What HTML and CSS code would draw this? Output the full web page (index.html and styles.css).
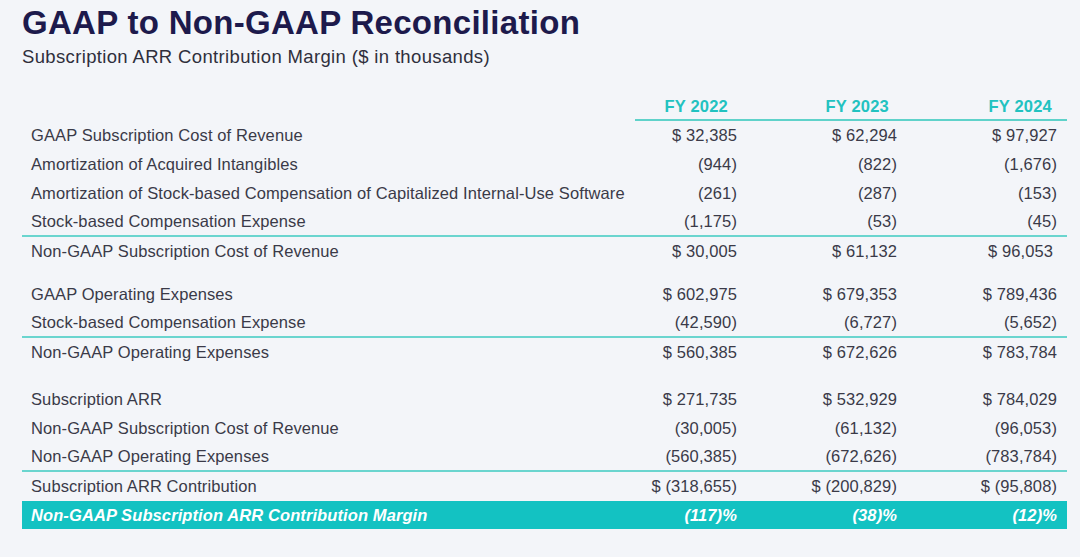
FILE: index.html
```html
<!DOCTYPE html>
<html lang="en">
<head>
<meta charset="utf-8">
<title>GAAP to Non-GAAP Reconciliation</title>
<link rel="stylesheet" href="styles.css">
</head>
<body>
<div class="slide">
  <h1 class="title">GAAP to Non-GAAP Reconciliation</h1>
  <p class="subtitle">Subscription ARR Contribution Margin ($ in thousands)</p>

  <div class="table">
    <div class="row head">
      <span class="label"></span>
      <span class="yr yr-1">FY 2022</span>
      <span class="yr yr-2">FY 2023</span>
      <span class="yr yr-3">FY 2024</span>
    </div>

    <div class="row">
      <span class="label">GAAP Subscription Cost of Revenue</span>
      <span class="num">$ 32,385</span><span class="num">$ 62,294</span><span class="num">$ 97,927</span>
    </div>
    <div class="row">
      <span class="label">Amortization of Acquired Intangibles</span>
      <span class="num">(944)</span><span class="num">(822)</span><span class="num">(1,676)</span>
    </div>
    <div class="row">
      <span class="label">Amortization of Stock-based Compensation of Capitalized Internal-Use Software</span>
      <span class="num">(261)</span><span class="num">(287)</span><span class="num">(153)</span>
    </div>
    <div class="row ruled">
      <span class="label">Stock-based Compensation Expense</span>
      <span class="num">(1,175)</span><span class="num">(53)</span><span class="num">(45)</span>
    </div>
    <div class="row">
      <span class="label">Non-GAAP Subscription Cost of Revenue</span>
      <span class="num">$ 30,005</span><span class="num">$ 61,132</span><span class="num inset">$ 96,053</span>
    </div>

    <div class="row gap-s">
      <span class="label">GAAP Operating Expenses</span>
      <span class="num">$ 602,975</span><span class="num">$ 679,353</span><span class="num">$ 789,436</span>
    </div>
    <div class="row ruled">
      <span class="label">Stock-based Compensation Expense</span>
      <span class="num">(42,590)</span><span class="num">(6,727)</span><span class="num">(5,652)</span>
    </div>
    <div class="row">
      <span class="label">Non-GAAP Operating Expenses</span>
      <span class="num">$ 560,385</span><span class="num">$ 672,626</span><span class="num">$ 783,784</span>
    </div>

    <div class="row gap-l">
      <span class="label">Subscription ARR</span>
      <span class="num">$ 271,735</span><span class="num">$ 532,929</span><span class="num">$ 784,029</span>
    </div>
    <div class="row">
      <span class="label">Non-GAAP Subscription Cost of Revenue</span>
      <span class="num">(30,005)</span><span class="num">(61,132)</span><span class="num">(96,053)</span>
    </div>
    <div class="row ruled">
      <span class="label">Non-GAAP Operating Expenses</span>
      <span class="num">(560,385)</span><span class="num">(672,626)</span><span class="num">(783,784)</span>
    </div>
    <div class="row">
      <span class="label">Subscription ARR Contribution</span>
      <span class="num">$ (318,655)</span><span class="num">$ (200,829)</span><span class="num">$ (95,808)</span>
    </div>
    <div class="row total">
      <span class="label">Non-GAAP Subscription ARR Contribution Margin</span>
      <span class="num">(117)%</span><span class="num">(38)%</span><span class="num">(12)%</span>
    </div>
  </div>
</div>
</body>
</html>
```

FILE: styles.css
```css
* { box-sizing: border-box; }

html, body {
  margin: 0;
  padding: 0;
  background: #f3f5f9;
}

body {
  font-family: "Liberation Sans", Arial, Helvetica, sans-serif;
  color: #3a3a48;
}

.slide {
  width: 1080px;
  height: 557px;
  padding: 5px 0 0 0;
  overflow: hidden;
}

.title {
  margin: 0 0 0 22px;
  font-size: 33px;
  line-height: 36px;
  font-weight: 700;
  letter-spacing: 0.3px;
  color: #1d1a4c;
}

.subtitle {
  margin: 5px 0 0 22px;
  font-size: 18.5px;
  line-height: 22px;
  letter-spacing: 0.35px;
  color: #2f2f3c;
}

.table {
  margin: 25px 0 0 22px;
  width: 1045px;
}

.row {
  display: grid;
  grid-template-columns: 613px 112px 160px 160px;
  height: 29px;
  align-items: center;
  font-size: 16.5px;
  letter-spacing: 0.1px;
}

.row .label {
  padding-left: 9px;
  white-space: nowrap;
}

.row .num {
  text-align: right;
  padding-right: 10px;
  white-space: nowrap;
}

.row .num.inset { padding-right: 14px; }

.row.ruled { border-bottom: 2px solid #6ad5cf; }

.row.gap-s { margin-top: 14px; }
.row.gap-l { margin-top: 18px; }

.row.head {
  height: 28px;
  align-items: stretch;
}

.row.head .yr {
  display: flex;
  align-items: center;
  justify-content: flex-end;
  border-bottom: 2px solid #5fd2ca;
  color: #22c2c0;
  font-weight: 700;
  font-size: 16.5px;
  letter-spacing: 0.2px;
}

.row.head .yr-1 { padding-right: 19px; }
.row.head .yr-2 { padding-right: 18px; }
.row.head .yr-3 { padding-right: 15px; }

.row.total {
  height: 28px;
  background: #13c2c2;
  color: #ffffff;
  font-weight: 700;
  font-style: italic;
}
```
